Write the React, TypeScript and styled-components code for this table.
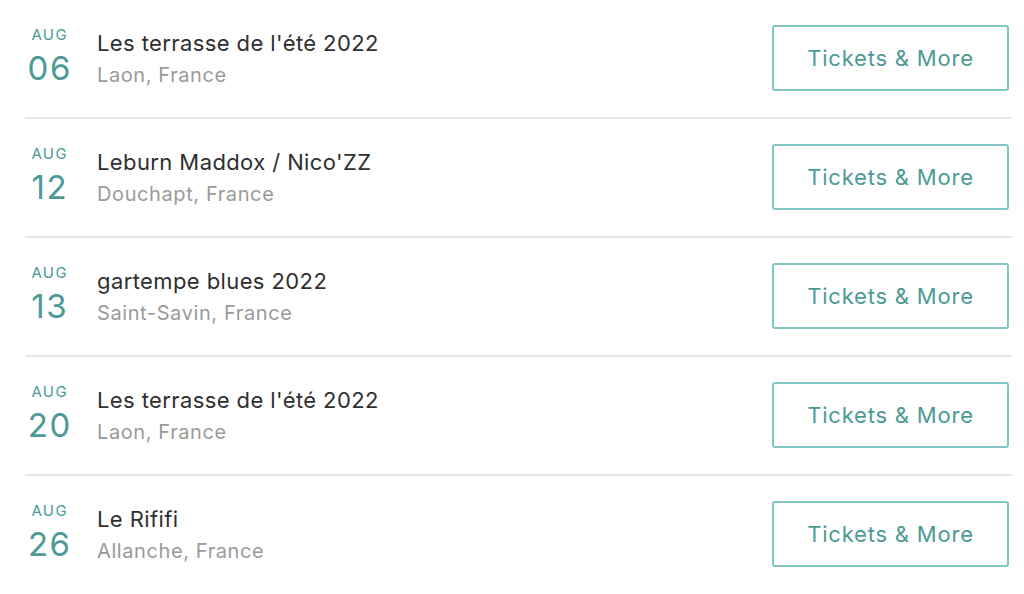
import React from "react";
import styled, { createGlobalStyle } from "styled-components";

const Global = createGlobalStyle`
  html, body { margin: 0; padding: 0; background: #ffffff; }
  body { font-family: Inter, "Noto Sans", sans-serif; }
`;

const List = styled.div`
  display: flex;
  flex-direction: column;
  padding: 0 12px 0 25px;
`;

const Row = styled.div<{ $last?: boolean }>`
  display: flex;
  align-items: center;
  height: 117px;
  border-bottom: ${(p) => (p.$last ? "none" : "2px solid #e6e6e6")};
`;

const DateCol = styled.div`
  width: 48px;
  display: flex;
  flex-direction: column;
  align-items: center;
  color: #4c9a96;
  margin-right: 24px;
  margin-top: -4px;
`;

const Month = styled.div`
  font-size: 15px;
  line-height: 16px;
  letter-spacing: 1.4px;
  margin-right: -1.4px;
`;

const Day = styled.div`
  font-size: 33px;
  line-height: 36px;
  letter-spacing: 1.5px;
  margin-right: -1.5px;
  margin-top: 7px;
`;

const Info = styled.div`
  flex: 1;
  display: flex;
  flex-direction: column;
  gap: 4px;
  margin-top: -2px;
`;

const Title = styled.div`
  font-size: 22px;
  line-height: 30px;
  letter-spacing: 0.4px;
  color: #2f2f2f;
`;

const Place = styled.div`
  font-size: 20px;
  line-height: 26px;
  letter-spacing: 0.6px;
  color: #9a9a9a;
`;

const Button = styled.button`
  width: 237px;
  height: 66px;
  margin: -2px 3px 0 0;
  border: 2px solid #84c6c2;
  border-radius: 3px;
  background: #fff;
  color: #4c9a96;
  font-family: Inter, "Noto Sans", sans-serif;
  font-size: 22px;
  letter-spacing: 0.8px;
  cursor: pointer;
`;

const events = [
  { d: "06", t: "Les terrasse de l'été 2022", p: "Laon, France" },
  { d: "12", t: "Leburn Maddox / Nico'ZZ", p: "Douchapt, France" },
  { d: "13", t: "gartempe blues 2022", p: "Saint-Savin, France" },
  { d: "20", t: "Les terrasse de l'été 2022", p: "Laon, France" },
  { d: "26", t: "Le Rififi", p: "Allanche, France" },
];

export default function App() {
  return (
    <>
      <Global />
      <List>
        {events.map((e, i) => (
          <Row key={i} $last={i === events.length - 1}>
            <DateCol>
              <Month>AUG</Month>
              <Day>{e.d}</Day>
            </DateCol>
            <Info>
              <Title>{e.t}</Title>
              <Place>{e.p}</Place>
            </Info>
            <Button>Tickets &amp; More</Button>
          </Row>
        ))}
      </List>
    </>
  );
}
